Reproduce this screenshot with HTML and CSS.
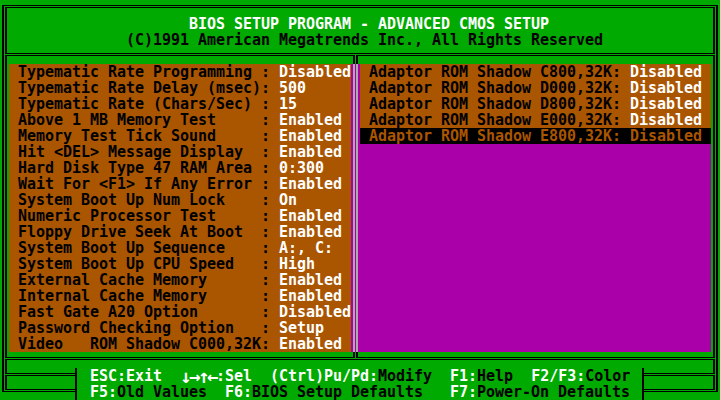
FILE: index.html
```html
<!DOCTYPE html>
<html lang="en">
<head>
    <meta charset="UTF-8">
    <title>BIOS Setup - Advanced CMOS Setup</title>
    <link rel="stylesheet" href="styles.css">
</head>
<body>

<div class="screen">

    <!-- top frame -->
    <div class="line">
        <i class="c tl"></i><i class="h w78"></i><i class="c tr"></i>
    </div>
    <div class="line">
        <i class="c v"></i>
        <div class="head"><span class="title">BIOS SETUP PROGRAM - ADVANCED CMOS SETUP</span></div>
        <i class="c v"></i>
    </div>
    <div class="line">
        <i class="c v"></i>
        <div class="head"><span class="copy">(C)1991 American Megatrends Inc., All Rights Reserved</span></div>
        <i class="c v"></i>
    </div>
    <div class="line">
        <i class="c lj"></i><i class="h w38"></i><i class="c tj"></i><i class="h w39"></i><i class="c rj"></i>
    </div>

    <!-- settings -->
    <div class="main">
        <i class="c v tall"></i>

        <div class="panel left">
            <div class="item"><span>Typematic Rate Programming</span><span>:</span><span class="val">Disabled</span></div>
            <div class="item"><span>Typematic Rate Delay (msec)</span><span>:</span><span class="val">500</span></div>
            <div class="item"><span>Typematic Rate (Chars/Sec)</span><span>:</span><span class="val">15</span></div>
            <div class="item"><span>Above 1 MB Memory Test</span><span>:</span><span class="val">Enabled</span></div>
            <div class="item"><span>Memory Test Tick Sound</span><span>:</span><span class="val">Enabled</span></div>
            <div class="item"><span>Hit &lt;DEL&gt; Message Display</span><span>:</span><span class="val">Enabled</span></div>
            <div class="item"><span>Hard Disk Type 47 RAM Area</span><span>:</span><span class="val">0:300</span></div>
            <div class="item"><span>Wait For &lt;F1&gt; If Any Error</span><span>:</span><span class="val">Enabled</span></div>
            <div class="item"><span>System Boot Up Num Lock</span><span>:</span><span class="val">On</span></div>
            <div class="item"><span>Numeric Processor Test</span><span>:</span><span class="val">Enabled</span></div>
            <div class="item"><span>Floppy Drive Seek At Boot</span><span>:</span><span class="val">Enabled</span></div>
            <div class="item"><span>System Boot Up Sequence</span><span>:</span><span class="val">A:, C:</span></div>
            <div class="item"><span>System Boot Up CPU Speed</span><span>:</span><span class="val">High</span></div>
            <div class="item"><span>External Cache Memory</span><span>:</span><span class="val">Enabled</span></div>
            <div class="item"><span>Internal Cache Memory</span><span>:</span><span class="val">Enabled</span></div>
            <div class="item"><span>Fast Gate A20 Option</span><span>:</span><span class="val">Disabled</span></div>
            <div class="item"><span>Password Checking Option</span><span>:</span><span class="val">Setup</span></div>
            <div class="item"><span>Video   ROM Shadow C000,32K</span><span>:</span><span class="val">Enabled</span></div>
        </div>

        <i class="c v tall scroll"></i>

        <div class="panel right">
            <div class="item on"><span>Adaptor ROM Shadow C800,32K</span><span>:</span><span class="val">Disabled</span></div>
            <div class="item on"><span>Adaptor ROM Shadow D000,32K</span><span>:</span><span class="val">Disabled</span></div>
            <div class="item on"><span>Adaptor ROM Shadow D800,32K</span><span>:</span><span class="val">Disabled</span></div>
            <div class="item on"><span>Adaptor ROM Shadow E000,32K</span><span>:</span><span class="val">Disabled</span></div>
            <div class="item sel"><span>Adaptor ROM Shadow E800,32K</span><span>:</span><span class="val">Disabled</span></div>
        </div>

        <i class="c v tall"></i>
    </div>

    <div class="line">
        <i class="c lj"></i><i class="h w38"></i><i class="c bj"></i><i class="h w39"></i><i class="c rj"></i>
    </div>

    <!-- key help -->
    <div class="line">
        <i class="c lj"></i><i class="h w7"></i><i class="c sl"></i>
        <div class="keys"><b>ESC:Exit</b>  <b><span class="arr">↓</span><span class="arr">→</span><span class="arr">↑</span><span class="arr">←</span>:Sel</b>  <b>(Ctrl)Pu/Pd:</b>Modify  <b>F1:</b>Help  <b>F2/F3:</b>Color</div>
        <i class="c sr"></i><i class="h w7"></i><i class="c rj"></i>
    </div>
    <div class="line">
        <i class="c bl"></i><i class="h w7"></i><i class="c sl"></i>
        <div class="keys"><b>F5:</b>Old Values  <b>F6:</b>BIOS Setup Defaults   <b>F7:</b>Power-On Defaults</div>
        <i class="c sr"></i><i class="h w7"></i><i class="c br"></i>
    </div>

</div>

</body>
</html>
```

FILE: styles.css
```css
/* VGA Textmodus: 80x25 Zeichen, je 9x16 Pixel */
body {
    margin: 0;
    background-color: #00aa00;
}

.screen {
    width: 720px;
    height: 400px;
    overflow: hidden;
    background-color: #00aa00;
    color: #000000;
    font-family: "DejaVu Sans Mono", monospace;
    font-size: 15px;
    font-weight: bold;
    line-height: 16px;
    letter-spacing: -0.03px;
}

.line {
    display: flex;
    height: 16px;
}

/* Rahmenzeichen, gezeichnet wie die Glyphen der VGA-Schrift */
.c, .h {
    --ink: #000000;
    display: block;
    flex: none;
    height: 16px;
    background-repeat: no-repeat;
}

.c {
    width: 9px;
}

.h { /* ═ */
    background-image: linear-gradient(var(--ink), var(--ink)), linear-gradient(var(--ink), var(--ink));
    background-position: 0 5px, 0 7px;
    background-size: 100% 1px, 100% 1px;
}

.w7 { width: 63px; }
.w38 { width: 342px; }
.w39 { width: 351px; }
.w78 { width: 702px; }

.v { /* ║ */
    background-image: linear-gradient(var(--ink), var(--ink)), linear-gradient(var(--ink), var(--ink));
    background-position: 2px 0, 5px 0;
    background-size: 2px 100%, 2px 100%;
}

.tall {
    height: 288px;
}

.tl { /* ╔ */
    background-image: linear-gradient(var(--ink), var(--ink)), linear-gradient(var(--ink), var(--ink)),
                      linear-gradient(var(--ink), var(--ink)), linear-gradient(var(--ink), var(--ink));
    background-position: 2px 5px, 2px 5px, 5px 7px, 5px 7px;
    background-size: 7px 1px, 2px 11px, 4px 1px, 2px 9px;
}

.tr { /* ╗ */
    background-image: linear-gradient(var(--ink), var(--ink)), linear-gradient(var(--ink), var(--ink)),
                      linear-gradient(var(--ink), var(--ink)), linear-gradient(var(--ink), var(--ink));
    background-position: 0 5px, 5px 5px, 0 7px, 2px 7px;
    background-size: 7px 1px, 2px 11px, 4px 1px, 2px 9px;
}

.lj { /* ╠ */
    background-image: linear-gradient(var(--ink), var(--ink)), linear-gradient(var(--ink), var(--ink)),
                      linear-gradient(var(--ink), var(--ink)), linear-gradient(var(--ink), var(--ink)),
                      linear-gradient(var(--ink), var(--ink));
    background-position: 2px 0, 5px 0, 5px 7px, 5px 5px, 5px 7px;
    background-size: 2px 16px, 2px 6px, 2px 9px, 4px 1px, 4px 1px;
}

.rj { /* ╣ */
    background-image: linear-gradient(var(--ink), var(--ink)), linear-gradient(var(--ink), var(--ink)),
                      linear-gradient(var(--ink), var(--ink)), linear-gradient(var(--ink), var(--ink)),
                      linear-gradient(var(--ink), var(--ink));
    background-position: 5px 0, 2px 0, 2px 7px, 0 5px, 0 7px;
    background-size: 2px 16px, 2px 6px, 2px 9px, 4px 1px, 4px 1px;
}

.tj { /* ╦ */
    background-image: linear-gradient(var(--ink), var(--ink)), linear-gradient(var(--ink), var(--ink)),
                      linear-gradient(var(--ink), var(--ink)), linear-gradient(var(--ink), var(--ink)),
                      linear-gradient(var(--ink), var(--ink));
    background-position: 0 5px, 0 7px, 5px 7px, 2px 8px, 5px 8px;
    background-size: 9px 1px, 4px 1px, 4px 1px, 2px 8px, 2px 8px;
}

.bj { /* ╩ */
    background-image: linear-gradient(var(--ink), var(--ink)), linear-gradient(var(--ink), var(--ink)),
                      linear-gradient(var(--ink), var(--ink)), linear-gradient(var(--ink), var(--ink)),
                      linear-gradient(var(--ink), var(--ink));
    background-position: 2px 0, 5px 0, 0 5px, 5px 5px, 0 7px;
    background-size: 2px 5px, 2px 5px, 4px 1px, 4px 1px, 9px 1px;
}

.bl { /* ╚ */
    background-image: linear-gradient(var(--ink), var(--ink)), linear-gradient(var(--ink), var(--ink)),
                      linear-gradient(var(--ink), var(--ink)), linear-gradient(var(--ink), var(--ink));
    background-position: 2px 0, 2px 7px, 5px 0, 5px 5px;
    background-size: 2px 8px, 7px 1px, 2px 6px, 4px 1px;
}

.br { /* ╝ */
    background-image: linear-gradient(var(--ink), var(--ink)), linear-gradient(var(--ink), var(--ink)),
                      linear-gradient(var(--ink), var(--ink)), linear-gradient(var(--ink), var(--ink));
    background-position: 5px 0, 0 7px, 2px 0, 0 5px;
    background-size: 2px 8px, 7px 1px, 2px 6px, 4px 1px;
}

.sl { /* ╡ */
    background-image: linear-gradient(var(--ink), var(--ink)), linear-gradient(var(--ink), var(--ink)),
                      linear-gradient(var(--ink), var(--ink));
    background-position: 3px 0, 0 5px, 0 7px;
    background-size: 2px 16px, 5px 1px, 5px 1px;
}

.sr { /* ╞ */
    background-image: linear-gradient(var(--ink), var(--ink)), linear-gradient(var(--ink), var(--ink)),
                      linear-gradient(var(--ink), var(--ink));
    background-position: 3px 0, 3px 5px, 3px 7px;
    background-size: 2px 16px, 6px 1px, 6px 1px;
}

/* Kopfzeilen */
.head {
    width: 702px;
    flex: none;
    white-space: pre;
}

.title {
    margin-left: 180px;
    color: #ffffff;
}

.copy {
    margin-left: 117px;
}

/* Einstellungen */
.main {
    display: flex;
    height: 288px;
}

.panel {
    flex: none;
    height: 288px;
}

.left {
    width: 342px;
    background-color: #aa5500;
}

.right {
    width: 351px;
    background-color: #aa00aa;
}

.scroll {
    --ink: #aaaaaa;
    background-color: #aa00aa;
}

.item {
    display: grid;
    grid-template-columns: 243px 18px auto;
    height: 16px;
    padding-left: 9px;
    white-space: pre;
}

.item .val {
    color: #ffffff;
}

.item.on {
    background-color: #aa5500;
}

.item.sel {
    background-color: #000000;
    color: #aa5500;
}

.item.sel .val {
    color: #aa5500;
}

/* Tastenhilfe */
.keys {
    width: 549px;
    padding-left: 9px;
    flex: none;
    white-space: pre;
}

.keys b {
    font-weight: bold;
    color: #ffffff;
}

/* Pfeile wie im VGA-Zeichensatz etwas groesser */
.arr {
    display: inline-block;
    width: 9px;
    height: 16px;
    overflow: visible;
    text-align: center;
    vertical-align: top;
    font-size: 19px;
    line-height: 16px;
    letter-spacing: 0;
}
```
